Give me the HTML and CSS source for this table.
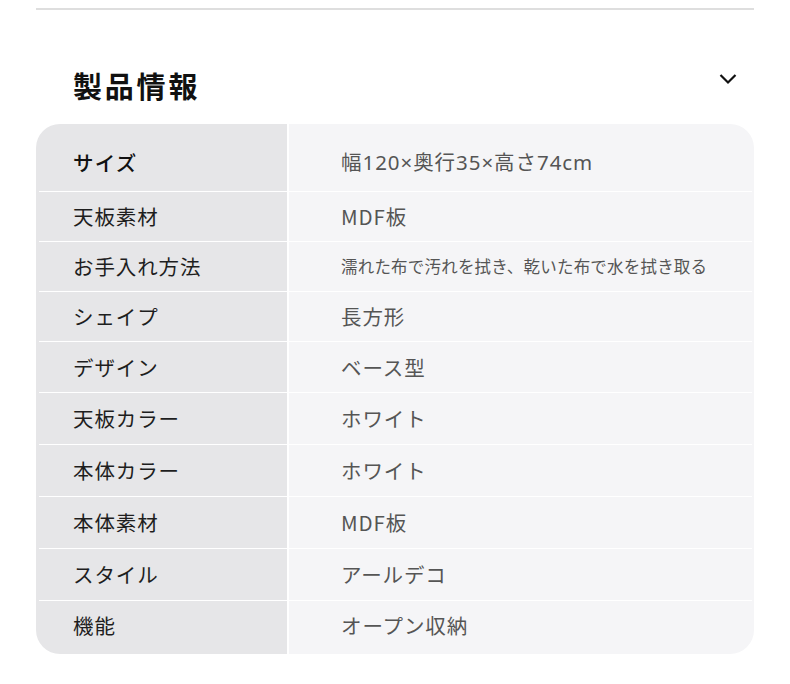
FILE: index.html
```html
<!DOCTYPE html>
<html lang="ja">
<head>
<meta charset="utf-8">
<link rel="stylesheet" href="styles.css">
</head>
<body>
<div class="page">
  <div class="topline"></div>
  <div class="header">
    <h2 class="title">製品情報</h2>
    <svg class="chev" width="18" height="12" viewBox="0 0 18 12"><path d="M1.5 2 L9 9.5 L16.5 2" fill="none" stroke="#111" stroke-width="2.2"/></svg>
  </div>
  <div class="table">
    <div class="row r1"><div class="k strong">サイズ</div><div class="v latin">幅120×奥行35×高さ74cm</div></div>
    <div class="row r2"><div class="k">天板素材</div><div class="v">MDF板</div></div>
    <div class="row r2"><div class="k">お手入れ方法</div><div class="v small">濡れた布で汚れを拭き、乾いた布で水を拭き取る</div></div>
    <div class="row r2"><div class="k">シェイプ</div><div class="v">長方形</div></div>
    <div class="row r3"><div class="k">デザイン</div><div class="v">ベース型</div></div>
    <div class="row r4"><div class="k">天板カラー</div><div class="v">ホワイト</div></div>
    <div class="row r4"><div class="k">本体カラー</div><div class="v">ホワイト</div></div>
    <div class="row r4"><div class="k">本体素材</div><div class="v">MDF板</div></div>
    <div class="row r4"><div class="k">スタイル</div><div class="v">アールデコ</div></div>
    <div class="row r5"><div class="k">機能</div><div class="v">オープン収納</div></div>
  </div>
</div>
</body>
</html>
```
FILE: styles.css
```css
html, body {
  margin: 0;
  padding: 0;
  background: #fff;
}
body {
  font-family: "Noto Sans CJK JP", "Noto Sans", sans-serif;
  color: #222;
}
.page {
  padding: 8px 36px 0 36px;
}
.topline {
  height: 2px;
  background: #dedede;
}
.header {
  display: flex;
  justify-content: space-between;
  align-items: flex-start;
  height: 114px;
}
.title {
  margin: 55px 0 0 37px;
  font-size: 29px;
  font-weight: 700;
  letter-spacing: 2.8px;
  line-height: 40px;
  color: #111;
}
.chev {
  margin: 63px 17px 0 0;
}
.table {
  border-radius: 24px;
  overflow: hidden;
  display: flex;
  flex-direction: column;
}
.row {
  display: grid;
  grid-template-columns: 251px 1fr;
  column-gap: 2px;
  background: #fff;
}
.k, .v {
  display: flex;
  align-items: center;
  font-size: 20.5px;
  line-height: 28px;
  letter-spacing: 0.9px;
}
.k {
  padding-left: 37px;
  background: linear-gradient(#fff, #fff) right top / calc(100% - 3px) 1px no-repeat, #e6e6e8;
  color: #1e1e1e;
}
.v {
  padding-left: 52px;
  background: linear-gradient(#fff, #fff) left top / calc(100% - 2px) 1px no-repeat, #f5f5f7;
  color: #555;
}
.r1 .k { background: #e6e6e8; padding-top: 9px; }
.r1 .v { background: #f5f5f7; padding-top: 9px; }
.strong { font-weight: 500; color: #111; letter-spacing: 1.2px; }
.latin {
  font-family: "Noto Sans", "Noto Sans CJK JP", sans-serif;
  letter-spacing: 0.95px;
}
.v.small { font-size: 16.5px; letter-spacing: 0.2px; }
.r1 { height: 67px; }
.r2 { height: 50px; }
.r3 { height: 51px; }
.r4 { height: 52px; }
.r5 { height: 54px; }
.r5 .k, .r5 .v { padding-bottom: 4px; }
```
